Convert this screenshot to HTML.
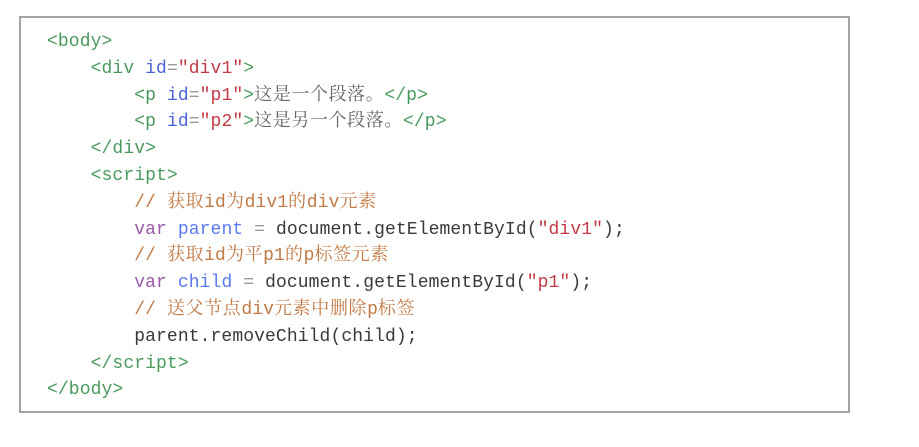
<!DOCTYPE html>
<html><head><meta charset="utf-8"><style>
html,body{margin:0;padding:0;background:#fff;width:919px;height:447px;overflow:hidden}
.box{position:absolute;left:19px;top:16px;width:827px;height:393px;border:2px solid #a3a3a3;}
.code{position:absolute;left:47px;top:29px;margin:0;font-family:"Liberation Mono","Noto Serif CJK SC",monospace;font-size:18px;color:#3a3a3a;letter-spacing:0.1px}
.code div{height:26.8px;line-height:26.8px;white-space:pre}
.z{font-family:"Noto Serif CJK SC",serif;letter-spacing:0.6px;line-height:1px}
.t{color:#4a9a5e}.a{color:#4a64d8}.s{color:#c23a45}.c{color:#c27a45}.k{color:#9a5aa8}.v{color:#5a78f0}.o{color:#999}
</style></head><body>
<div class="box"></div>
<div class="code">
<div><span class="t">&lt;body&gt;</span></div>
<div>    <span class="t">&lt;div</span> <span class="a">id</span><span class="o">=</span><span class="s">"div1"</span><span class="t">&gt;</span></div>
<div>        <span class="t">&lt;p</span> <span class="a">id</span><span class="o">=</span><span class="s">"p1"</span><span class="t">&gt;</span><span class="z" style="color:#666">这是一个段落。</span><span class="t">&lt;/p&gt;</span></div>
<div>        <span class="t">&lt;p</span> <span class="a">id</span><span class="o">=</span><span class="s">"p2"</span><span class="t">&gt;</span><span class="z" style="color:#666">这是另一个段落。</span><span class="t">&lt;/p&gt;</span></div>
<div>    <span class="t">&lt;/div&gt;</span></div>
<div>    <span class="t">&lt;script&gt;</span></div>
<div>        <span class="c">// <span class="z">获取</span>id<span class="z">为</span>div1<span class="z">的</span>div<span class="z">元素</span></span></div>
<div>        <span class="k">var</span> <span class="v">parent</span> <span class="o">=</span> document.getElementById(<span class="s">"div1"</span>);</div>
<div>        <span class="c">// <span class="z">获取</span>id<span class="z">为平</span>p1<span class="z">的</span>p<span class="z">标签元素</span></span></div>
<div>        <span class="k">var</span> <span class="v">child</span> <span class="o">=</span> document.getElementById(<span class="s">"p1"</span>);</div>
<div>        <span class="c">// <span class="z">送父节点</span>div<span class="z">元素中删除</span>p<span class="z">标签</span></span></div>
<div>        parent.removeChild(child);</div>
<div>    <span class="t">&lt;/script&gt;</span></div>
<div><span class="t">&lt;/body&gt;</span></div>
</div>
</body></html>
